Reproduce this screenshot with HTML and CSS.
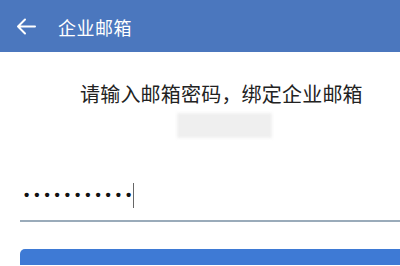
FILE: index.html
```html
<!DOCTYPE html>
<html lang="zh">
<head>
<meta charset="utf-8">
<link rel="stylesheet" href="styles.css">
</head>
<body>
<header class="bar">
  <svg class="back" width="20" height="17" viewBox="0 0 20 17">
    <path d="M19 8.5H2M9 1.5L2 8.5l7 7" fill="none" stroke="#fff" stroke-width="2" stroke-linecap="round" stroke-linejoin="round"/>
  </svg>
  <span class="title">企业邮箱</span>
</header>
<main class="content">
  <p class="hint">请输入邮箱密码，绑定企业邮箱</p>
  <div class="account"></div>
  <div class="field">
    <span class="dots">•••••••••••</span><span class="caret"></span>
  </div>
  <div class="line"></div>
  <div class="btn"></div>
</main>
</body>
</html>
```
FILE: styles.css
```css
html, body {
  margin: 0;
  padding: 0;
  background: #fff;
  overflow: hidden;
}
body {
  width: 400px;
  height: 266px;
  font-family: "Noto Sans CJK SC", "Noto Sans", sans-serif;
}
.bar {
  height: 52px;
  background: #4b77be;
  display: flex;
  align-items: center;
  padding-left: 16px;
}
.back {
  display: block;
  margin-top: 1px;
}
.title {
  color: #fff;
  font-size: 18px;
  margin-left: 22px;
  line-height: 24px;
  margin-top: 2px;
  letter-spacing: 0.5px;
}
.content {
  display: flex;
  flex-direction: column;
}
.hint {
  margin: 30px 0 0 80px;
  font-size: 20px;
  line-height: 24px;
  color: #222;
  letter-spacing: 0.2px;
}
.account {
  margin: 7px 0 0 177px;
  width: 95px;
  height: 25px;
  background: #efefef;
  filter: blur(1.5px);
}
.field {
  margin: 45px 0 0 24px;
  height: 24px;
  display: flex;
  align-items: center;
}
.dots {
  font-family: "Liberation Sans", sans-serif;
  font-size: 15px;
  font-weight: bold;
  letter-spacing: 4.95px;
  color: #111;
  line-height: 24px;
}
.caret {
  width: 1px;
  height: 25px;
  background: #666;
  margin-left: -3px;
}
.line {
  margin: 13px 0 0 20px;
  height: 2px;
  background: #9aabba;
}
.btn {
  margin: 27px 0 0 20px;
  height: 16px;
  background: #3e7ad5;
  border-radius: 5px 0 0 0;
}
```
